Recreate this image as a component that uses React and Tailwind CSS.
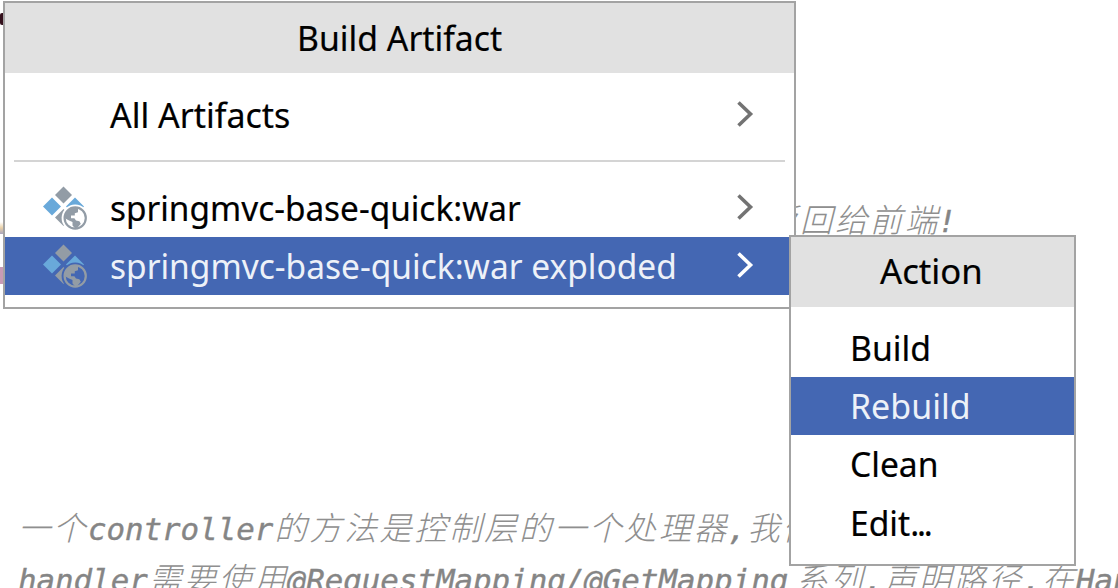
function Label({ children, className = '' }) {
  return (
    <span className={`inline-block whitespace-pre font-['Noto_Sans','Noto_Sans_CJK_SC',sans-serif] text-[35px] leading-[58px] ${className}`}>
      {children}
    </span>
  );
}

function Chevron({ className }) {
  return (
    <svg className={`shrink-0 ${className}`} width="18" height="28" viewBox="0 0 18 28" fill="none" stroke="currentColor" strokeWidth="3.6">
      <path d="M1.5 2.5L13.5 14L1.5 25.5" />
    </svg>
  );
}

function ArtifactIcon({ selected }) {
  const halo = selected ? '#4467b3' : '#ffffff';
  const gray = selected ? '#939ca5' : '#929ca6';
  return (
    <svg className="shrink-0" width="46" height="46" viewBox="0 0 46 46">
      <path d="M20.5 1.5L29 10L20.5 18.5L12 10Z" fill={gray} />
      <path d="M9 12.5L18 21.5L9 30.5L0 21.5Z" fill="#69a9da" />
      <path d="M32 12.5L41 21.5L32 30.5L23 21.5Z" fill="#69a9da" />
      <path d="M20.5 24L29 32.6L20.5 41L12 32.6Z" fill={gray} />
      <circle cx="32.2" cy="33" r="13.6" fill={halo} />
      <circle cx="32.2" cy="33" r="10.6" fill="none" stroke={gray} strokeWidth="2.2" />
      <path d="M35 22.5C28 21.5 22 25.5 21.5 33L26 35.5L29.5 37V40.5L32 43.2L34.5 42.8L37.8 38.8L36.4 36.3L33 35.6L31.4 33.2H28V30.6H31.8V28.2L35 27.3V24.4Z" fill={gray} />
    </svg>
  );
}

function Cjk({ children, className = '' }) {
  return <span className={`inline-block pl-px font-['Noto_Sans_CJK_SC',sans-serif] text-[32.5px] font-light tracking-[2.45px] text-[#8f8f8f] -mr-px [-webkit-text-stroke:0px] ${className}`}>{children}</span>;
}

function CodeLine({ children, className }) {
  return (
    <div className={`flex items-baseline whitespace-pre font-['DejaVu_Sans_Mono',monospace] text-[30.8px] leading-[52px] text-[#858585] italic [-webkit-text-stroke:0.4px_#858585] ${className}`}>
      {children}
    </div>
  );
}

export default function App() {
  return (
    <div className="relative h-[588px] w-[1118px] overflow-hidden bg-white">
      <div className="flex h-full flex-col pt-[192px]">
        <CodeLine className="h-[52px] shrink-0 pl-[764px]">
          <Cjk>返回给前端</Cjk><span className="-ml-px">!</span>
        </CodeLine>
        <div className="h-[256px] shrink-0" />
        <CodeLine className="h-[51px] shrink-0 pl-[18px]">
          <Cjk className="-ml-px mr-0">一个</Cjk>controller<Cjk>的方法是控制层的一个处理器</Cjk>,<Cjk>我们</Cjk>
        </CodeLine>
        <CodeLine className="h-[52px] shrink-0 pl-[18px]">
          handler<Cjk>需要使用</Cjk>@RequestMapping/@GetMapping<Cjk className="ml-[6px]">系列</Cjk>,<Cjk>声明路径</Cjk>,<Cjk>在</Cjk>Handler
        </CodeLine>
      </div>
      <div className="absolute top-[13px] left-0 h-[12px] w-[3px] rounded-l-[2px] bg-[#34101c]" />
      <div className="absolute top-[222px] left-0 h-[12px] w-[3px] bg-linear-to-b from-white via-[#e8cfa6] to-[#a9a5bd]" />
      <div className="absolute top-[267px] left-0 h-[17px] w-[3px] bg-[#c79bb5]" />

      <div className="absolute top-[1px] left-[3px] flex h-[308px] w-[793px] flex-col border-2 border-[#a3a3a3] bg-white text-black">
        <div className="flex h-[70px] shrink-0 items-center bg-[#e1e1e1] pl-[292px]">
          <Label className="origin-left scale-x-[0.965] [-webkit-text-stroke:0.2px_currentColor]">Build Artifact</Label>
        </div>
        <div className="flex h-[87px] shrink-0 items-center justify-between pr-[39px] pb-[6px] pl-[105px]">
          <Label className="mt-[2px] origin-left scale-x-[0.97] [-webkit-text-stroke:0.2px_currentColor]">All Artifacts</Label>
          <Chevron className="text-[#737373]" />
        </div>
        <div className="mx-[9px] h-[2px] shrink-0 bg-[#d4d4d4]" />
        <div className="mt-[17px] flex h-[58px] shrink-0 items-center pr-[39px] pl-[38px]">
          <ArtifactIcon />
          <Label className="ml-[21px] origin-left scale-x-[0.953] [-webkit-text-stroke:0.2px_currentColor]">springmvc-base-quick:war</Label>
          <Chevron className="mb-[3px] ml-auto text-[#737373]" />
        </div>
        <div className="flex h-[58px] shrink-0 items-center bg-[#4467b3] pr-[39px] pl-[38px] text-white">
          <ArtifactIcon selected />
          <Label className="ml-[21px] origin-left scale-x-[0.957] text-[#edf1f8]">springmvc-base-quick:war exploded</Label>
          <Chevron className="mb-[2px] ml-auto text-white" />
        </div>
      </div>

      <div className="absolute top-[235px] left-[789px] flex h-[331px] w-[287px] flex-col border-2 border-[#a3a3a3] bg-white text-black">
        <div className="flex h-[70px] shrink-0 items-center bg-[#e1e1e1] pb-[2px] pl-[89px]">
          <Label className="origin-left scale-x-[0.99] [-webkit-text-stroke:0.2px_currentColor]">Action</Label>
        </div>
        <div className="flex flex-col pt-[12px]">
          <div className="flex h-[58px] items-center pl-[59px]"><Label className="origin-left scale-x-[0.965] [-webkit-text-stroke:0.2px_currentColor]">Build</Label></div>
          <div className="flex h-[58px] items-center bg-[#4467b3] pl-[59px]"><Label className="origin-left scale-x-[0.97] text-[#edf1f8]">Rebuild</Label></div>
          <div className="flex h-[58px] items-center pl-[59px]"><Label className="origin-left scale-x-[0.96] [-webkit-text-stroke:0.2px_currentColor]">Clean</Label></div>
          <div className="flex h-[58px] items-center pt-[2px] pl-[59px]"><Label className="origin-left scale-x-[0.96] [-webkit-text-stroke:0.2px_currentColor]">Edit<span className="tracking-[-2.3px]">...</span></Label></div>
        </div>
      </div>
    </div>
  );
}
